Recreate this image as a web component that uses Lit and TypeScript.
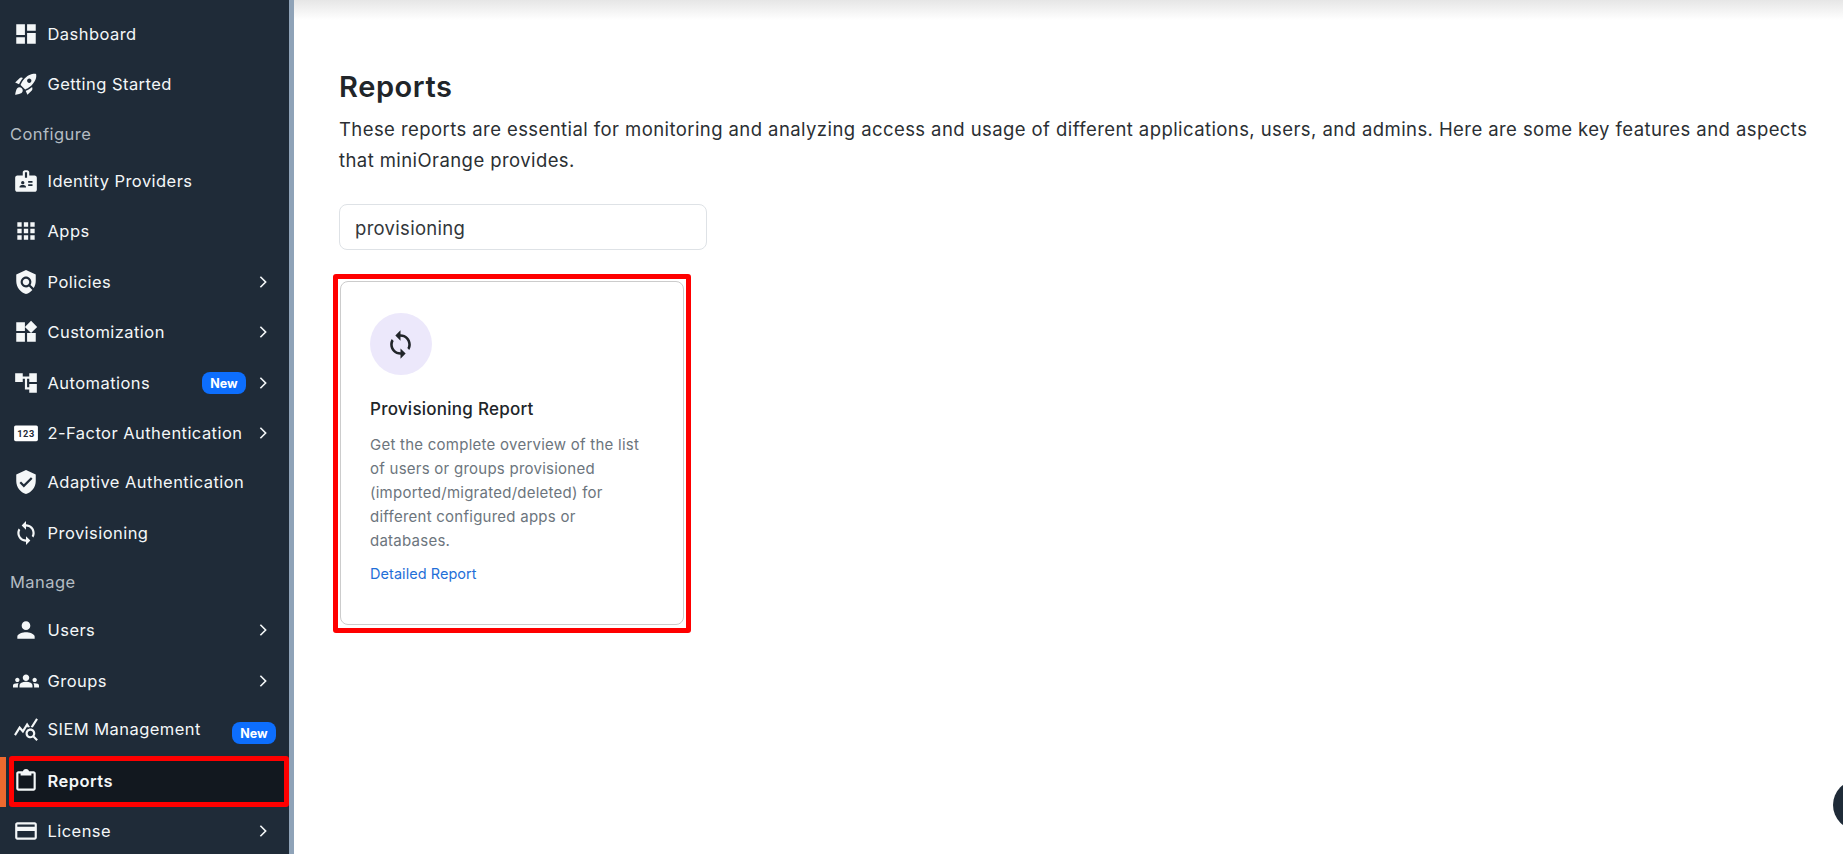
import { LitElement, html, css, svg } from "lit";
import { customElement } from "lit/decorators.js";

const P: Record<string, string> = {
  dash: "M3 13h8V3H3v10zm0 8h8v-6H3v6zm10 0h8V11h-8v10zm0-18v6h8V3h-8z",
  rocket: "M9.19 6.35c-2.04 2.29-3.44 5.58-3.57 5.89L2 10.69l4.05-4.05c.47-.47 1.15-.68 1.81-.55l1.33.26zM11.17 17s3.74-1.55 5.89-3.7c5.4-5.4 4.5-9.62 4.21-10.57-.95-.3-5.17-1.19-10.57 4.21C8.55 9.09 7 12.83 7 12.83L11.17 17zm6.48-2.19c-2.29 2.04-5.58 3.44-5.89 3.57L13.31 22l4.05-4.05c.47-.47.68-1.15.55-1.81l-.26-1.33zM9 18c0 .83-.34 1.58-.88 2.12C6.94 21.3 2 22 2 22s.7-4.94 1.88-6.12C4.42 15.34 5.17 15 6 15c1.66 0 3 1.34 3 3zm4-9c0-1.1.9-2 2-2s2 .9 2 2-.9 2-2 2-2-.9-2-2z",
  badge: "M20 7h-5V4c0-1.1-.9-2-2-2h-2c-1.1 0-2 .9-2 2v3H4c-1.1 0-2 .9-2 2v11c0 1.1.9 2 2 2h16c1.1 0 2-.9 2-2V9c0-1.1-.9-2-2-2zM9 12c.83 0 1.5.67 1.5 1.5S9.83 15 9 15s-1.5-.67-1.5-1.5S8.17 12 9 12zm3 6H6v-.43c0-.6.36-1.15.92-1.39.64-.28 1.34-.43 2.08-.43s1.44.15 2.08.43c.55.24.92.78.92 1.39V18zm1-9h-2V4h2v5zm5 7.5h-4V15h4v1.5zm0-3h-4V12h4v1.5z",
  apps: "M4 8h4V4H4v4zm6 12h4v-4h-4v4zm-6 0h4v-4H4v4zm0-6h4v-4H4v4zm6 0h4v-4h-4v4zm6-10v4h4V4h-4zm-6 4h4V4h-4v4zm6 6h4v-4h-4v4zm0 6h4v-4h-4v4z",
  policy: "M21 5l-9-4-9 4v6c0 5.55 3.84 10.74 9 12 2.3-.56 4.33-1.9 5.88-3.71l-3.12-3.12c-1.94 1.29-4.58 1.07-6.29-.64-1.95-1.95-1.95-5.12 0-7.07 1.95-1.95 5.12-1.95 7.07 0 1.71 1.71 1.92 4.35.64 6.29l2.9 2.9C20.29 15.69 21 13.38 21 11V5zM12 15c1.66 0 3-1.34 3-3s-1.34-3-3-3-3 1.34-3 3 1.34 3 3 3z",
  widgets: "M13 13v8h8v-8h-8zM3 21h8v-8H3v8zM3 3v8h8V3H3zm13.66-1.31L11 7.34 16.66 13l5.66-5.66-5.66-5.65z",
  tree: "M22 11V3h-7v3H9V3H2v8h7V8h2v10h4v3h7v-8h-7v3h-2V8h2v3z",
  shield: "M12 1 3 5v6c0 5.55 3.84 10.74 9 12 5.16-1.26 9-6.45 9-12V5l-9-4zm-2 16-4-4 1.41-1.41L10 14.17l6.59-6.59L18 9l-8 8z",
  sync: "M12 4V1L8 5l4 4V6c3.31 0 6 2.69 6 6 0 1.01-.25 1.97-.7 2.8l1.46 1.46C19.54 15.03 20 13.57 20 12c0-4.42-3.58-8-8-8zm0 14c-3.31 0-6-2.69-6-6 0-1.01.25-1.97.7-2.8L5.24 7.74C4.46 8.97 4 10.43 4 12c0 4.42 3.58 8 8 8v3l4-4-4-4v3z",
  person: "M12 12c2.21 0 4-1.79 4-4s-1.79-4-4-4-4 1.79-4 4 1.79 4 4 4zm0 2c-2.67 0-8 1.34-8 4v2h16v-2c0-2.66-5.33-4-8-4z",
  groups: "M4 13c1.1 0 2-.9 2-2s-.9-2-2-2-2 .9-2 2 .9 2 2 2zm1.13 1.1C4.76 14.04 4.39 14 4 14c-.99 0-1.93.21-2.78.58C.48 14.9 0 15.62 0 16.43V18h4.5v-1.61c0-.83.23-1.61.63-2.29zM20 13c1.1 0 2-.9 2-2s-.9-2-2-2-2 .9-2 2 .9 2 2 2zm4 3.43c0-.81-.48-1.53-1.22-1.85-.85-.37-1.79-.58-2.78-.58-.39 0-.76.04-1.13.1.4.68.63 1.46.63 2.29V18H24v-1.57zm-7.76-2.78c-1.17-.52-2.61-.9-4.24-.9s-3.07.39-4.24.9C6.68 14.13 6 15.21 6 16.39V18h12v-1.61c0-1.18-.68-2.26-1.76-2.74zM12 12c1.66 0 3-1.34 3-3s-1.34-3-3-3-3 1.34-3 3 1.34 3 3 3z",
  stats: "M19.88 18.47c.44-.7.7-1.51.7-2.39 0-2.49-2.01-4.5-4.5-4.5s-4.5 2.01-4.5 4.5 2.01 4.5 4.49 4.5c.88 0 1.7-.26 2.39-.7L21.58 23 23 21.58l-3.12-3.11zm-3.8.11c-1.38 0-2.5-1.12-2.5-2.5s1.12-2.5 2.5-2.5 2.5 1.12 2.5 2.5-1.12 2.5-2.5 2.5zm-.36-8.5c-.74.02-1.45.18-2.1.45l-.55-.83-3.8 6.18-3.01-3.52-3.63 5.81L1 17l5-8 3 3.5L13 6l2.72 4.08zm2.59.5c-.64-.28-1.33-.45-2.05-.49L21.38 2 23 3.18l-4.69 7.4z",
  clip: "M19 3h-4.18C14.4 1.84 13.3 1 12 1s-2.4.84-2.82 2H5c-1.1 0-2 .9-2 2v14c0 1.1.9 2 2 2h14c1.1 0 2-.9 2-2V5c0-1.1-.9-2-2-2zM7 5v2h10V5h2v14H5V5h2z",
  card: "M20 4H4c-1.11 0-1.99.89-1.99 2L2 18c0 1.11.89 2 2 2h16c1.11 0 2-.89 2-2V6c0-1.11-.89-2-2-2zm0 14H4v-6h16v6zm0-10H4V6h16v2z",
};

type Row = { t: string; i?: string; chev?: boolean; isNew?: boolean; sec?: boolean; active?: boolean; d?: number; far?: boolean };
const ROWS: Row[] = [
  { t: "Dashboard", i: "dash" },
  { t: "Getting Started", i: "rocket" },
  { t: "Configure", sec: true },
  { t: "Identity Providers", i: "badge" },
  { t: "Apps", i: "apps" },
  { t: "Policies", i: "policy", chev: true, d: 1 },
  { t: "Customization", i: "widgets", chev: true },
  { t: "Automations", i: "tree", chev: true, isNew: true, d: 1 },
  { t: "2-Factor Authentication", i: "pin", chev: true },
  { t: "Adaptive Authentication", i: "shield", d: -1 },
  { t: "Provisioning", i: "sync", d: 1 },
  { t: "Manage", sec: true, d: -1 },
  { t: "Users", i: "person", chev: true, d: 1 },
  { t: "Groups", i: "groups", chev: true, d: 1 },
  { t: "SIEM Management", i: "stats", isNew: true, far: true },
  { t: "Reports", i: "clip", active: true },
  { t: "License", i: "card", chev: true, d: -1 },
];

const chevron = svg`<polyline points="8.5,5 15.5,12 8.5,19" fill="none" stroke="currentColor" stroke-width="2.2"/>`;
const icon = (n: string) =>
  n === "pin"
    ? svg`<rect x="1" y="5" width="22" height="14.5" rx="1.5" fill="#fff"/><text x="12" y="15.4" text-anchor="middle" font-size="8.5" font-weight="700" font-family="Roboto, sans-serif" fill="#1f2b38">123</text>`
    : svg`<path fill="currentColor" fill-rule="evenodd" d=${P[n]}/>`;

@customElement("app-root")
export class AppRoot extends LitElement {
  static styles = css`
    :host { display: block; width: 1843px; height: 854px; overflow: hidden; position: relative; background: #fff;
      font-family: "Inter", "Noto Sans", sans-serif; }
    .page { display: flex; height: 854px; }
    .side { width: 289px; flex: none; background: #1f2b38; padding-top: 9px; box-sizing: border-box; color: #f4f7f8; position: relative; overflow: hidden; }
    .track { width: 5px; flex: none; background: #8fa3b8; }
    .row { height: 50px; display: flex; align-items: center; padding-left: 13px; box-sizing: border-box; font-size: 16.5px; letter-spacing: .45px; position: relative; white-space: nowrap; }
    .row > svg.ic { width: 26px; height: 26px; flex: none; margin-right: 8.5px; }
    .sec { height: 47px; padding-left: 10px; color: #b4bcc3; padding-top: 3px; }
    .chev { position: absolute; left: 254px; top: 16px; width: 18px; height: 18px; }
    .new { position: absolute; left: 202px; top: 14px; height: 22px; width: 44px; background: #0d6efd; border-radius: 8px; color: #fff; font-size: 12.5px; font-weight: 700; letter-spacing: 0; display: flex; align-items: center; justify-content: center; }
    .new.far { left: 232px; top: 16px; }
    .siem { padding-bottom: 4px; }
    .active { margin-left: 9px; padding: 0 0 2px; width: 280px; height: 51px; border: 5px solid #f00; border-radius: 3px; background: #12181f; font-weight: 600; }
    .active > svg.ic { margin-left: -1px; margin-right: 8.5px; }
    .mark { position: absolute; left: -14px; top: -4px; width: 6px; height: 50px; background: #ee6a2f; }
    .main { flex: 1; padding: 70px 0 0 45px; box-sizing: border-box; position: relative; min-width: 0; color: #212529; }
    .shade { position: absolute; left: 0; right: 0; top: 0; height: 20px; background: linear-gradient(#e6e6e6, #fff); }
    h1 { margin: 0; font-size: 29px; line-height: 34px; font-weight: 600; letter-spacing: .6px; }
    .intro { margin: 10px 0 0; font-size: 18.5px; line-height: 31px; width: 1500px; letter-spacing: .42px; color: #2b2f33; }
    .search { margin-top: 28px; width: 368px; height: 46px; box-sizing: border-box; border: 1px solid #dee2e6; border-radius: 8px; padding: 2px 0 0 15px; display: flex; align-items: center; font-size: 18.5px; letter-spacing: .3px; color: #33373b; }
    .hit { margin: 24px 0 0 -6px; width: 358px; height: 359px; box-sizing: border-box; border: 5px solid #f00; border-radius: 3px; padding: 2px 2px 3px; }
    .card { height: 100%; box-sizing: border-box; border: 1px solid #ccc; border-radius: 8px; padding: 31px 29px 0; }
    .circle { width: 62px; height: 62px; border-radius: 50%; background: #ece8fb; display: flex; align-items: center; justify-content: center; color: #212529; }
    .circle svg { width: 31px; height: 31px; margin-left: -1px; }
    h2 { margin: 22px 0 0; font-size: 17px; line-height: 24px; font-weight: 500; letter-spacing: .25px; color: #212529; }
    .desc { margin: 12px 0 0; font-size: 15px; line-height: 24px; letter-spacing: .25px; color: #6c757d; width: 282px; }
    .link { display: block; margin-top: 11px; font-size: 14.5px; line-height: 20px; letter-spacing: .05px; color: #1f6fd8; text-decoration: none; }
    .bubble { position: absolute; left: 1833px; top: 780px; width: 50px; height: 50px; border-radius: 50%; background: #1f2b38; }
  `;

  render() {
    return html`<div class="page">
      <nav class="side">
        ${ROWS.map((r) =>
          r.sec
            ? html`<div class="row sec" style=${r.d ? `margin-top:${r.d}px` : ""}>${r.t}</div>`
            : html`<div class="row ${r.active ? "active" : ""} ${r.far ? "siem" : ""}" style=${r.d ? `margin-top:${r.d}px` : ""}>
                ${r.active ? html`<span class="mark"></span>` : ""}
                <svg class="ic" viewBox="0 0 24 24">${icon(r.i!)}</svg>
                <span>${r.t}</span>
                ${r.isNew ? html`<span class="new ${r.far ? "far" : ""}">New</span>` : ""}
                ${r.chev ? html`<svg class="chev" viewBox="0 0 24 24">${chevron}</svg>` : ""}
              </div>`
        )}
      </nav>
      <div class="track"></div>
      <main class="main">
        <div class="shade"></div>
        <h1>Reports</h1>
        <p class="intro">These reports are essential for monitoring and analyzing access and usage of different applications, users, and admins. Here are some key features and aspects that miniOrange provides.</p>
        <div class="search">provisioning</div>
        <div class="hit">
          <div class="card">
            <div class="circle"><svg viewBox="0 0 24 24">${icon("sync")}</svg></div>
            <h2>Provisioning Report</h2>
            <p class="desc">Get the complete overview of the list of users or groups provisioned (imported/migrated/deleted) for different configured apps or databases.</p>
            <a class="link" href="#">Detailed Report</a>
          </div>
        </div>
      </main>
    </div>
    <div class="bubble"></div>`;
  }
}
